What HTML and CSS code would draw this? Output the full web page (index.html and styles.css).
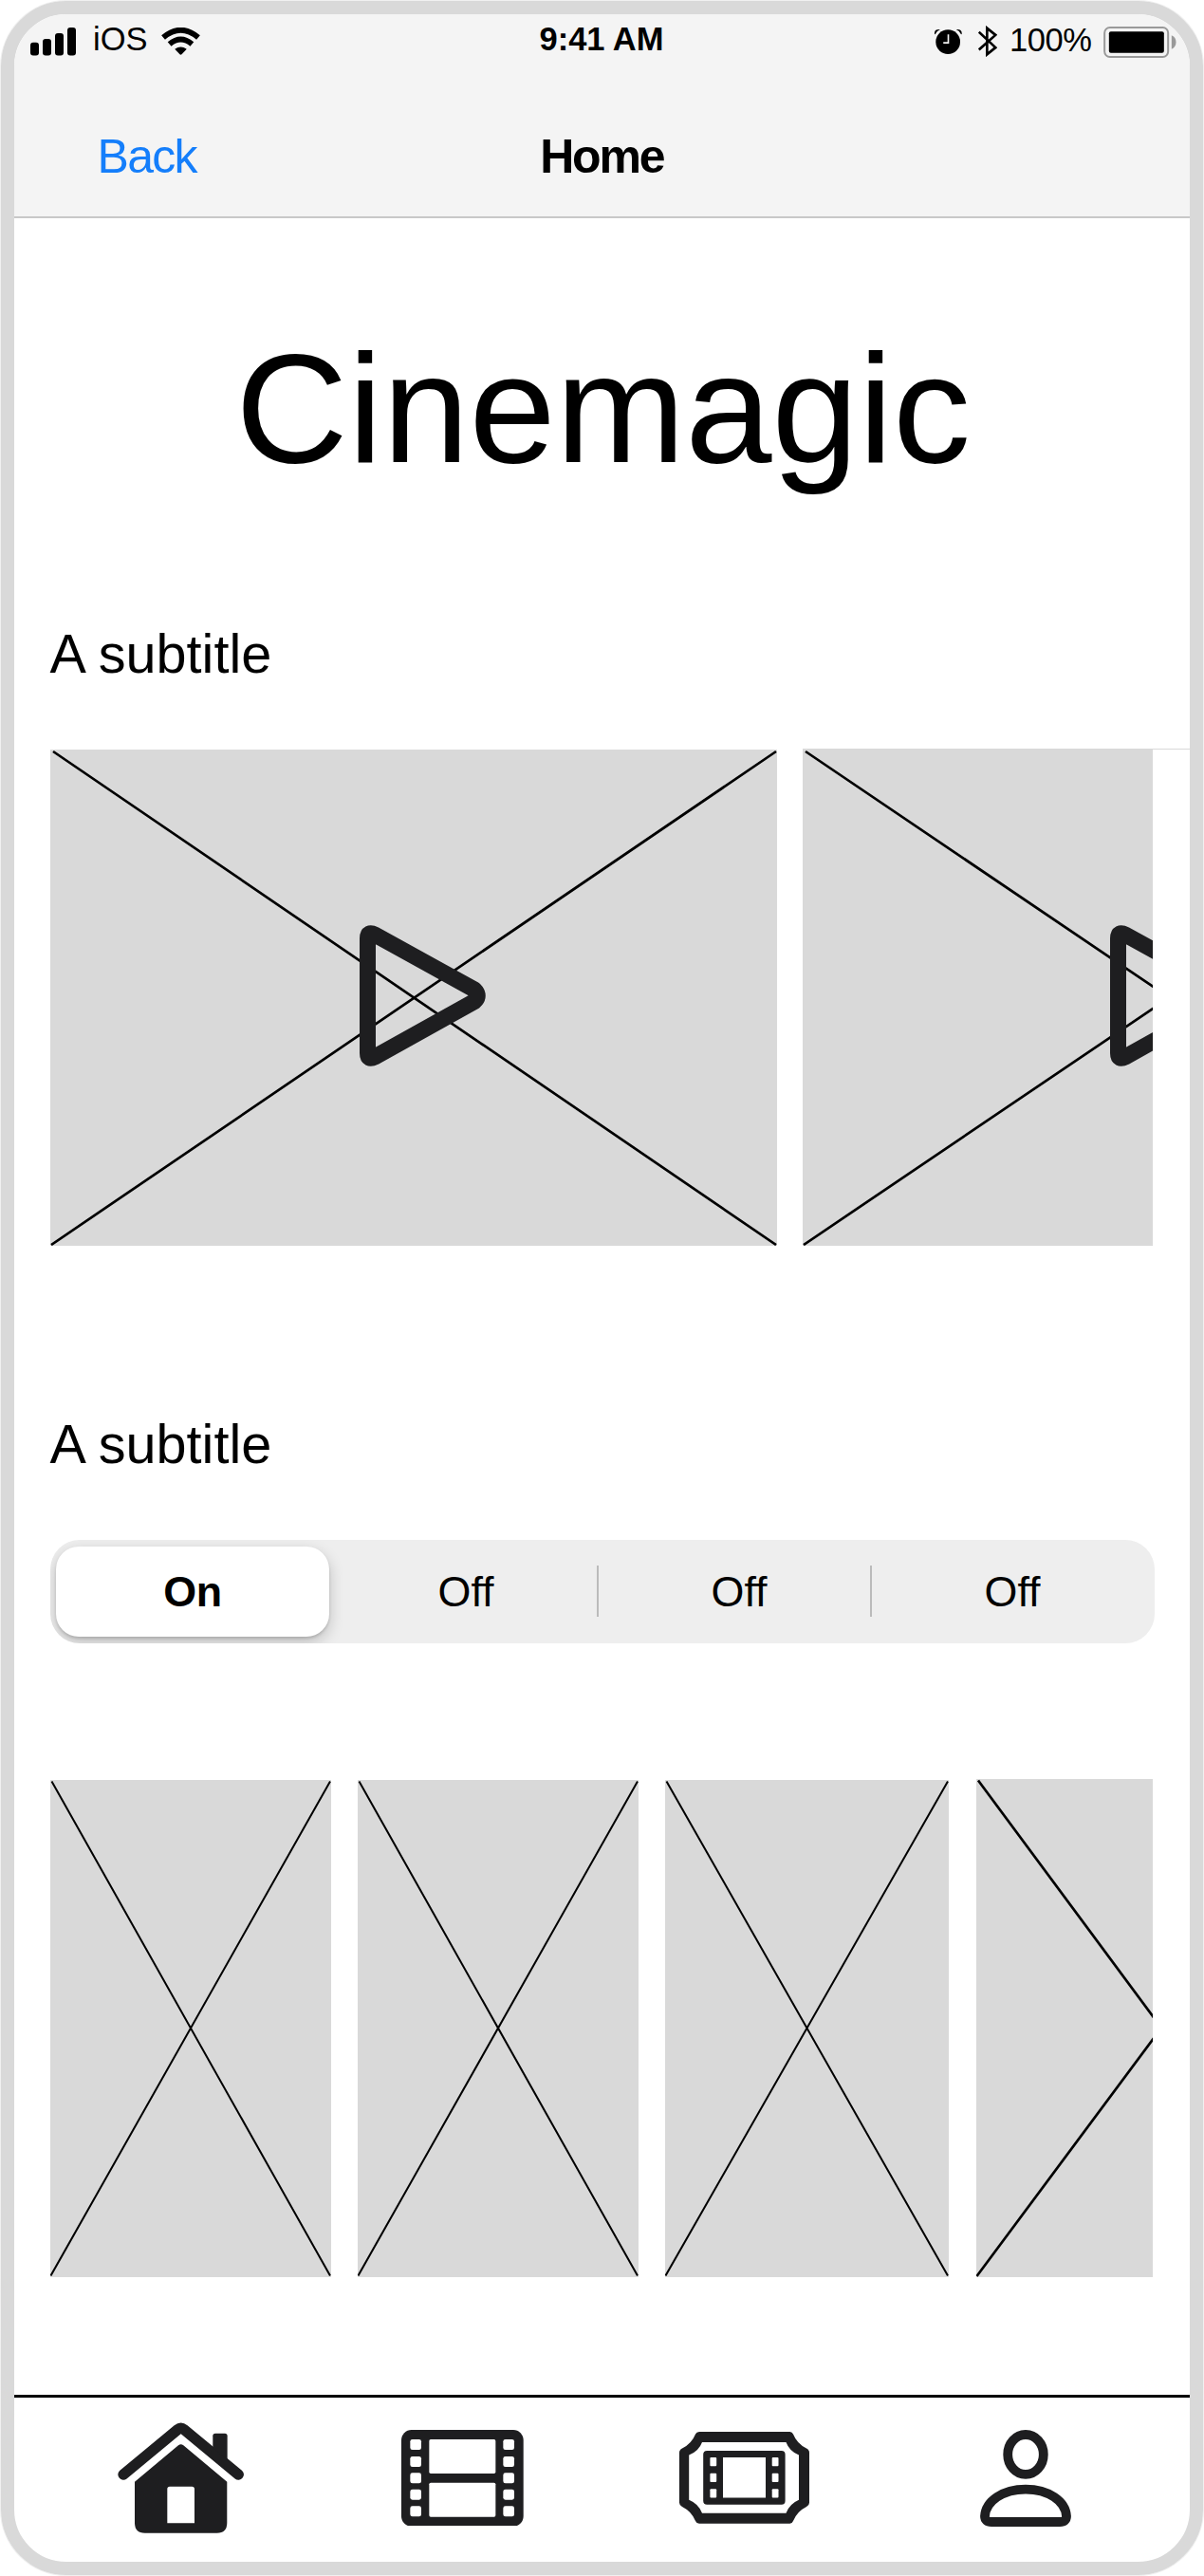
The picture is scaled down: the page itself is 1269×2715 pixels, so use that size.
FILE: index.html
```html
<!DOCTYPE html>
<html lang="en">
<head>
<meta charset="utf-8">
<title>Cinemagic</title>
<link rel="stylesheet" href="styles.css">
</head>
<body>
<div class="phone">
  <header class="header">
    <div class="status">
      <div class="status-left">
        <svg class="signal" viewBox="0 0 48 30"><rect x="0" y="15.7" width="9" height="13.7" rx="3"/><rect x="13" y="12" width="9" height="17.4" rx="3"/><rect x="26" y="6" width="9" height="23.4" rx="3"/><rect x="39" y="0" width="9" height="29.4" rx="3"/></svg>
        <span class="carrier">iOS</span>
        <svg class="wifi" viewBox="511 87 122 88"><g fill="none" stroke="#000" stroke-width="18"><path d="M516 119Q572 72 628 119"/><path d="M536 140Q572 110 608 140"/></g><path d="M553 156Q572 142 591 156L575 173Q572 176 569 173Z"/></svg>
      </div>
      <span class="clock">9:41 AM</span>
      <div class="status-right">
        <svg class="alarm" viewBox="404 90 88 82"><circle cx="447" cy="133" r="39"/><path d="M404 108Q402 91 422 93Q410 98 406 109ZM491 108Q493 91 473 93Q485 98 489 109Z"/><path d="M448 109V136H432" fill="none" stroke="#f4f4f4" stroke-width="5"/></svg>
        <svg class="bluetooth" viewBox="543 82 60 100"><path d="M545 102L598 152L571 174V90L598 112L545 159" fill="none" stroke="#000" stroke-width="8"/></svg>
        <span class="percent">100%</span>
        <svg class="battery" viewBox="940 84 230 99"><rect x="943" y="87" width="201" height="93" rx="17" fill="none" stroke="#999" stroke-width="6"/><rect x="957" y="100" width="174" height="67" rx="6"/><path d="M1155 112Q1169 118 1169 133.500T1155 155Z" fill="#999"/></svg>
      </div>
    </div>
    <nav class="nav">
      <a class="back">Back</a>
      <h1 class="screen-title">Home</h1>
    </nav>
  </header>

  <main class="main">
    <div class="brand">Cinemagic</div>
    <h2 class="subtitle">A subtitle</h2>
    <section class="trailers">
      <div class="trailer first">
        <svg width="767" height="523" viewBox="0 0 767 523"><path class="cross" d="M3 2L765 522M765 2L1 522"/><path class="play" d="M334.500 199Q334.500 191 342 195L447 253Q453.500 259.500 447 265.500L342 324Q334.500 328 334.500 320Z"/></svg>
      </div>
      <div class="trailer second">
        <svg width="770" height="524" viewBox="0 0 770 524"><path class="cross" d="M3 3L770 522M770 3L1 523"/><path class="play" d="M332.500 200Q332.500 192 340 196L445 254Q451.500 260.500 445 266.500L340 325Q332.500 329 332.500 321Z"/></svg>
      </div>
      <div class="rule"></div>
    </section>

    <h2 class="subtitle second-title">A subtitle</h2>
    <div class="segments">
      <div class="segment on">On</div>
      <div class="segment">Off</div>
      <div class="segment">Off</div>
      <div class="segment">Off</div>
    </div>
    <section class="posters">
      <div class="poster"><svg width="296" height="524" viewBox="0 0 296 524"><path class="cross thin" d="M1.500 1.500L295 522.500M295 1.500L.5 522.500"/></svg></div>
      <div class="poster"><svg width="296" height="524" viewBox="0 0 296 524"><path class="cross thin" d="M1.500 1.500L295 522.500M295 1.500L.5 522.500"/></svg></div>
      <div class="poster wide"><svg width="299" height="524" viewBox="0 0 299 524"><path class="cross thin" d="M1.500 1.500L298 522.500M298 1.500L.5 522.500"/></svg></div>
      <div class="poster cut"><svg width="390" height="525" viewBox="0 0 390 525"><path class="cross" d="M2 1.500L389 524M389 1.500L.5 524"/></svg></div>
    </section>
  </main>

  <footer class="tabs">
    <svg class="tab home" viewBox="72 160 400 350"><path d="M90 325L262 183Q272 175 282 183L454 325" fill="none" stroke="#1e1e20" stroke-width="34" stroke-linecap="round"/><path d="M373 240V203Q373 195 381 195H411Q419 195 419 203V280Z"/><path fill-rule="evenodd" d="M126 348L264 233Q272 227 280 233L418 348V478Q418 510 386 510H158Q126 510 126 478ZM229 479H315V371Q315 363 307 363H237Q229 363 229 371Z"/></svg>
    <svg class="tab film" viewBox="970 182 386 305"><rect x="970" y="182" width="386" height="305" rx="32"/><g fill="#fff"><rect x="1058" y="212" width="210" height="108" rx="5"/><rect x="1058" y="349" width="210" height="108" rx="5"/><rect x="998" y="212" width="35" height="33" rx="7"/><rect x="998" y="266" width="35" height="33" rx="7"/><rect x="998" y="318" width="35" height="33" rx="7"/><rect x="998" y="370" width="35" height="33" rx="7"/><rect x="998" y="423" width="35" height="33" rx="7"/><rect x="1292" y="212" width="35" height="33" rx="7"/><rect x="1292" y="266" width="35" height="33" rx="7"/><rect x="1292" y="318" width="35" height="33" rx="7"/><rect x="1292" y="370" width="35" height="33" rx="7"/><rect x="1292" y="423" width="35" height="33" rx="7"/></g></svg>
    <svg class="tab ticket" viewBox="0 0 137 97"><path fill-rule="evenodd" d="M21 0H116.500Q119 0 120 2.500Q124 12.500 134 17.500Q137 19 137 22V74.700Q137 77.500 134 79Q124 84 120 94Q119 96.700 116.500 96.700H21Q18 96.700 17 94Q13 84 3 79Q0 77.500 0 74.700V22Q0 19 3 17.500Q13 12.500 17 2.500Q18 0 21 0ZM24 11Q20.500 20.500 10.200 24.500V71.700Q20.500 76 24 85.700H112.500Q116 76 126 71.700V24.500Q116 20.500 112.500 11Z"/><rect x="25.200" y="20" width="86.400" height="56.700" rx="4"/><g fill="#fff"><rect x="46" y="27" width="45" height="42.500"/><rect x="32.400" y="27" width="6.800" height="9.300" rx="1"/><rect x="32.400" y="43.700" width="6.800" height="9.300" rx="1"/><rect x="32.400" y="60.200" width="6.800" height="9.300" rx="1"/><rect x="97.700" y="27" width="6.800" height="9.300" rx="1"/><rect x="97.700" y="43.700" width="6.800" height="9.300" rx="1"/><rect x="97.700" y="60.200" width="6.800" height="9.300" rx="1"/></g></svg>
    <svg class="tab person" viewBox="0 0 96 102"><g fill="none" stroke="#1e1e20" stroke-width="9.800"><ellipse cx="48" cy="25.900" rx="18.800" ry="20.900"/><path d="M12 97Q5 97 5 91C6 75 24 62.600 48 62.600S90 75 91 91Q91 97 84 97Z"/></g></svg>
  </footer>
</div>
</body>
</html>
```
FILE: styles.css
```css
* { box-sizing: border-box; }
body {
  margin: 0;
  padding: 1px;
  background: #fff;
  color: #000;
  font-family: "Liberation Sans", Arial, sans-serif;
}
svg { display: block; flex: none; }
.phone {
  display: flex;
  flex-direction: column;
  width: 1267px;
  height: 2713px;
  border: 14px solid #d9d9d9;
  border-radius: 69px;
  overflow: hidden;
  box-shadow: 0 0 0 1px #f0f0f0;
}
.header {
  flex: none;
  height: 215px;
  background: #f4f4f4;
  border-bottom: 2px solid #c8c8c8;
}
.status {
  display: grid;
  grid-template-columns: 1fr auto 1fr;
  height: 52px;
  padding: 0 14px 0 17px;
  font-size: 34.5px;
  line-height: 53px;
}
.status-left, .status-right { display: flex; align-items: flex-start; }
.status-right { justify-content: flex-end; }
.signal { width: 48px; height: 30px; margin-top: 14px; }
.carrier { width: 57px; margin-left: 18px; }
.wifi { width: 41px; height: 29px; margin: 14px 0 0 15px; }
.clock { margin-left: -4px; font-weight: 700; }
.alarm { width: 29px; height: 27px; margin: 15px 17.500px 0 0; }
.bluetooth { width: 20px; height: 33px; margin: 12px 13px 0 0; }
.percent { width: 87px; letter-spacing: -.4px; padding-top: 1px; }
.battery { width: 77px; height: 33px; margin: 13px 0 0 12px; }
.nav {
  display: grid;
  grid-template-columns: 1fr auto 1fr;
  align-items: center;
  padding: 35px 0 0 87.500px;
  margin-right: 88px;
  height: 161px;
  font-size: 50px;
}
.back { color: #147efb; letter-spacing: -1.700px; }
.screen-title { margin: 0; font-size: 50px; letter-spacing: -2.200px; }
.main { flex: 1; padding: 101px 38px 0 37.500px; }
.brand {
  padding-left: 3px;
  font-size: 164px;
  line-height: 200px;
  text-align: center;
}
.subtitle {
  margin: 118px 0 0;
  font-size: 57.600px;
  font-weight: 400;
  line-height: 80px;
}
.trailers {
  display: flex;
  align-items: flex-start;
  height: 524px;
  margin: 60px -38px 0 0;
}
.trailer { flex: none; background: #d9d9d9; overflow: hidden; }
.first { width: 766.500px; height: 523px; margin: 1px 27px 0 0; }
.second { width: 369px; height: 524px; }
.rule { flex: 1; height: 1px; background: #d9d9d9; }
.cross { fill: none; stroke: #000; stroke-width: 2.700; }
.thin { stroke-width: 2; }
.play { fill: none; stroke: #1e1e20; stroke-width: 17; stroke-linejoin: round; }
.second-title { margin-top: 169px; }
.segments {
  display: grid;
  grid-template-columns: repeat(4, 288px);
  width: 1164px;
  height: 108.500px;
  margin-top: 61px;
  padding: 6.500px;
  border-radius: 31px;
  background: #eee;
  overflow: hidden;
}
.segment {
  position: relative;
  height: 95px;
  line-height: 94px;
  font-size: 44.800px;
  text-align: center;
}
.on {
  border-radius: 24px;
  background: #fff;
  font-weight: 700;
  letter-spacing: -.4px;
  box-shadow: 0 6px 16px rgba(0, 0, 0, .2), 0 2px 3px rgba(0, 0, 0, .14);
}
.segment:nth-child(n+2):not(:last-child)::after {
  content: "";
  position: absolute;
  top: 20.500px;
  right: 4px;
  width: 2px;
  height: 54px;
  background: #bbb;
}
.posters { display: flex; margin-top: 143.500px; height: 525px; }
.poster {
  flex: none;
  width: 296px;
  height: 524px;
  margin: 1px 28px 0 0;
  background: #d9d9d9;
  overflow: hidden;
}
.wide { width: 299.500px; margin-right: 29px; }
.cut { width: 186px; height: 525px; margin: 0; }
.tabs {
  display: flex;
  align-items: flex-start;
  flex: none;
  height: 176px;
  padding: 0 0 0 109px;
  border-top: 3px solid #000;
  fill: #1e1e20;
}
.home { width: 133.300px; height: 116.700px; margin-top: 26.300px; }
.film { width: 128.700px; height: 101.700px; margin: 33.700px 0 0 166px; }
.ticket { width: 137px; height: 97px; margin: 36px 0 0 164px; }
.person { width: 96px; height: 102px; margin: 34px 0 0 180px; }
```
